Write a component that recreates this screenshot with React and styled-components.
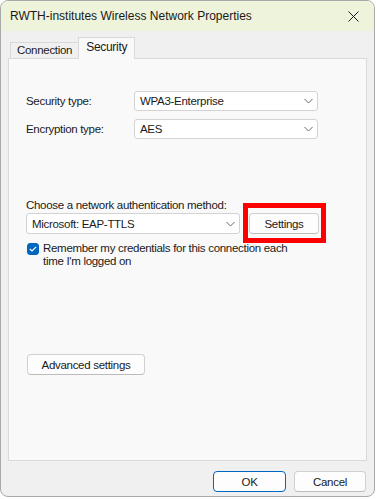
import React, { useState } from "react";
import styled, { createGlobalStyle } from "styled-components";

const Global = createGlobalStyle`
  html, body {
    margin: 0;
    padding: 0;
    background: #ffffff;
  }
  body {
    font-family: "Segoe UI", "Liberation Sans", Arial, sans-serif;
    font-size: 11.5px;
    letter-spacing: -0.3px;
    color: #1a1a1a;
  }
`;

const Window = styled.div`
  width: 375px;
  height: 497px;
  box-sizing: border-box;
  border: 1px solid #a9a9a9;
  border-radius: 8px;
  background: #f0f0f0;
  overflow: hidden;
  display: flex;
  flex-direction: column;
`;

const TitleBar = styled.div`
  height: 30px;
  flex: none;
  background: #eef3dc;
  display: flex;
  align-items: center;
  justify-content: space-between;
  padding: 0 9px 0 9px;
`;

const Title = styled.span`
  font-size: 12px;
  letter-spacing: 0;
  color: #1a1a1a;
`;

const CloseButton = styled.button`
  border: none;
  background: transparent;
  width: 20px;
  height: 20px;
  padding: 0;
  display: flex;
  align-items: center;
  justify-content: center;
  margin-right: 2px;
`;

const Body = styled.div`
  flex: 1;
  display: flex;
  flex-direction: column;
  padding: 6px 7px 0 7px;
`;

const TabRow = styled.div`
  display: flex;
  align-items: flex-end;
  padding-left: 2px;
  margin-bottom: -1px;
  position: relative;
  z-index: 1;
`;

const Tab = styled.div`
  box-sizing: border-box;
  height: ${(p) => (p.$active ? "22px" : "17px")};
  padding: ${(p) => (p.$active ? "0 7px 3px" : "0 6px")};
  border: 1px solid #d9d9d9;
  border-bottom: ${(p) => (p.$active ? "none" : "1px solid #d9d9d9")};
  margin-left: ${(p) => (p.$active ? "-1px" : "0")};
  background: ${(p) => (p.$active ? "#f9f9f9" : "#f0f0f0")};
  display: flex;
  align-items: center;
  line-height: 1;
  font-size: ${(p) => (p.$active ? "12px" : "11.5px")};
`;

const Panel = styled.div`
  height: 403px;
  flex: none;
  box-sizing: border-box;
  border: 1px solid #d9d9d9;
  background: #f9f9f9;
  padding: 32px 0 0 17px;
  display: flex;
  flex-direction: column;
`;

const FieldGrid = styled.div`
  display: grid;
  grid-template-columns: 108px 184px;
  row-gap: 8px;
  align-items: center;
`;

const Label = styled.span`
  line-height: 14px;
`;

const SelectBox = styled.div`
  box-sizing: border-box;
  flex: none;
  width: ${(p) => p.$width || "184px"};
  height: ${(p) => p.$height || "20px"};
  background: #ffffff;
  border: 1px solid #d3d3d3;
  border-radius: 3px;
  display: flex;
  align-items: center;
  justify-content: space-between;
  padding: 0 4px 0 5px;
`;

const AuthSection = styled.div`
  margin-top: 59px;
  display: flex;
  flex-direction: column;
`;

const AuthRow = styled.div`
  display: flex;
  align-items: center;
  gap: 9px;
  margin-top: 1px;
`;

/* red annotation frame drawn over the Settings button */
const Highlight = styled.div`
  position: relative;
  flex: none;
  width: 70px;
  display: flex;

  &::after {
    content: "";
    position: absolute;
    top: -10px;
    bottom: -9px;
    left: -6px;
    right: -7px;
    border: 5px solid #ff0000;
    pointer-events: none;
  }
`;

const Button = styled.button`
  box-sizing: border-box;
  flex: none;
  width: ${(p) => p.$width};
  min-width: 0;
  height: 21px;
  font-family: inherit;
  font-size: 11.5px;
  letter-spacing: -0.3px;
  color: #1a1a1a;
  background: #fdfdfd;
  border: 1px solid ${(p) => (p.$primary ? "#0067c0" : "#d0d0d0")};
  border-bottom-color: ${(p) => (p.$primary ? "#0067c0" : "#bcbcbc")};
  border-radius: 4px;
  padding: 0;
  display: flex;
  align-items: center;
  justify-content: center;
`;

const CheckRow = styled.label`
  display: flex;
  align-items: flex-start;
  gap: 4px;
  margin-top: 8px;
  margin-left: 1px;
`;

const Check = styled.span`
  flex: none;
  width: 12px;
  height: 12px;
  margin-top: 1px;
  border-radius: 3px;
  background: ${(p) => (p.$checked ? "#0067c0" : "#ffffff")};
  border: 1px solid ${(p) => (p.$checked ? "#0067c0" : "#8a8a8a")};
  box-sizing: border-box;
  display: flex;
  align-items: center;
  justify-content: center;
`;

const CheckText = styled.span`
  width: 246px;
  line-height: 13px;
`;

const AdvancedWrap = styled.div`
  margin-top: 86px;
  margin-left: 1px;
`;

const Footer = styled.div`
  display: flex;
  justify-content: flex-end;
  gap: 8px;
  padding: 10px 1px 0 0;
`;

const Chevron = () => (
  <svg width="9" height="6" viewBox="0 0 9 6" fill="none">
    <path d="M0.5 1 L4.5 5 L8.5 1" stroke="#6a6a6a" strokeWidth="1" />
  </svg>
);

const Select = ({ value, width, height }) => (
  <SelectBox $width={width} $height={height}>
    <span>{value}</span>
    <Chevron />
  </SelectBox>
);

export default function App() {
  const [remember, setRemember] = useState(true);
  return (
    <>
      <Global />
      <Window>
        <TitleBar>
          <Title>RWTH-institutes Wireless Network Properties</Title>
          <CloseButton aria-label="Close">
            <svg width="11" height="11" viewBox="0 0 11 11">
              <path d="M0.5 0.5 L10.5 10.5 M10.5 0.5 L0.5 10.5" stroke="#1a1a1a" strokeWidth="1" />
            </svg>
          </CloseButton>
        </TitleBar>
        <Body>
          <TabRow>
            <Tab>Connection</Tab>
            <Tab $active>Security</Tab>
          </TabRow>
          <Panel>
            <FieldGrid>
              <Label>Security type:</Label>
              <Select value="WPA3-Enterprise" />
              <Label>Encryption type:</Label>
              <Select value="AES" />
            </FieldGrid>
            <AuthSection>
              <Label>Choose a network authentication method:</Label>
              <AuthRow>
                <Select value="Microsoft: EAP-TTLS" width="214px" height="21px" />
                <Highlight>
                  <Button $width="70px">Settings</Button>
                </Highlight>
              </AuthRow>
              <CheckRow onClick={() => setRemember(!remember)}>
                <Check $checked={remember}>
                  {remember && (
                    <svg width="8" height="6" viewBox="0 0 8 6">
                      <path d="M0.8 3 L3 5 L7.2 0.8" stroke="#ffffff" strokeWidth="1.2" fill="none" />
                    </svg>
                  )}
                </Check>
                <CheckText>Remember my credentials for this connection each time I'm logged on</CheckText>
              </CheckRow>
            </AuthSection>
            <AdvancedWrap>
              <Button $width="118px">Advanced settings</Button>
            </AdvancedWrap>
          </Panel>
          <Footer>
            <Button $width="73px" $primary>OK</Button>
            <Button $width="72px">Cancel</Button>
          </Footer>
        </Body>
      </Window>
    </>
  );
}
